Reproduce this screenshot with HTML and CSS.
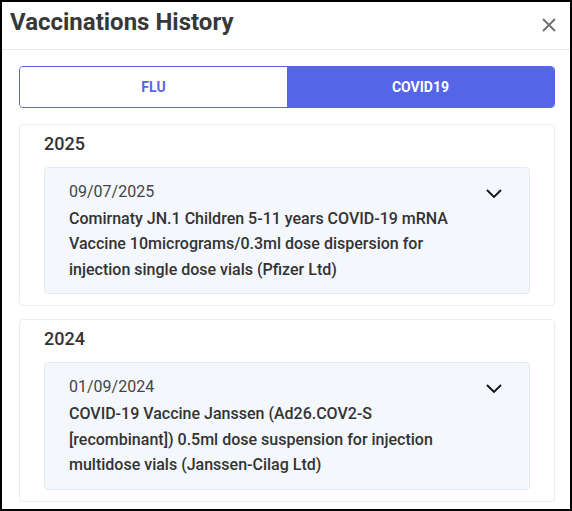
FILE: index.html
```html
<!DOCTYPE html>
<html>
<head>
<meta charset="utf-8">
<link rel="stylesheet" href="styles.css">
</head>
<body>
<div class="modal">
  <div class="header">
    <h1 class="title">Vaccinations History</h1>
    <svg class="close" width="14" height="14" viewBox="0 0 14 14"><path d="M1 1L13 13M13 1L1 13" stroke="#737373" stroke-width="2" fill="none"/></svg>
  </div>
  <div class="content">
    <div class="tabs">
      <div class="tab">FLU</div>
      <div class="tab active">COVID19</div>
    </div>
    <div class="card">
      <div class="year">2025</div>
      <div class="item">
        <div class="item-text">
          <div class="date">09/07/2025</div>
          <div class="desc">Comirnaty JN.1 Children 5-11 years COVID-19 mRNA Vaccine 10micrograms/0.3ml dose dispersion for injection single dose vials (Pfizer Ltd)</div>
        </div>
        <svg class="chev" width="16" height="10" viewBox="0 0 16 10"><path d="M1 1L8 8L15 1" stroke="#111" stroke-width="1.8" fill="none"/></svg>
      </div>
    </div>
    <div class="card">
      <div class="year">2024</div>
      <div class="item">
        <div class="item-text">
          <div class="date">01/09/2024</div>
          <div class="desc">COVID-19 Vaccine Janssen (Ad26.COV2-S [recombinant]) 0.5ml dose suspension for injection multidose vials (Janssen-Cilag Ltd)</div>
        </div>
        <svg class="chev" width="16" height="10" viewBox="0 0 16 10"><path d="M1 1L8 8L15 1" stroke="#111" stroke-width="1.8" fill="none"/></svg>
      </div>
    </div>
  </div>
</div>
</body>
</html>
```
FILE: styles.css
```css
html, body {
  margin: 0;
  padding: 0;
  background: #fff;
}
body {
  font-family: Roboto, "Liberation Sans", sans-serif;
}
.modal {
  box-sizing: border-box;
  width: 572px;
  height: 511px;
  border: 2px solid #000;
  background: #fff;
  overflow: hidden;
}
.header {
  height: 48px;
  box-sizing: border-box;
  border-bottom: 1px solid #e9e9f3;
  display: flex;
  align-items: flex-start;
  justify-content: space-between;
  padding: 4px 14px 0 8px;
}
.title {
  margin: 0;
  font-size: 24px;
  line-height: 32px;
  font-weight: 700;
  color: #383838;
}
.close {
  margin-top: 12px;
}
.content {
  padding: 16px 15px 0 17px;
}
.tabs {
  display: flex;
  height: 42px;
  box-sizing: border-box;
  border: 1px solid #5465e8;
  border-radius: 4px;
  overflow: hidden;
  margin-bottom: 16px;
}
.tab {
  flex: 1;
  display: flex;
  align-items: center;
  justify-content: center;
  font-size: 14px;
  font-weight: 700;
  color: #5465e8;
  background: #fff;
}
.tab.active {
  background: #5465e8;
  color: #fff;
}
.card {
  border: 1px solid #e6ecf4;
  border-radius: 4px;
  padding: 7px 24px 11px 24px;
  margin-bottom: 13px;
}
.year {
  font-size: 18px;
  line-height: 24px;
  font-weight: 500;
  color: #333;
  margin-bottom: 11px;
}
.item {
  display: flex;
  align-items: flex-start;
  gap: 18px;
  background: #f4f7fc;
  border: 1px solid #e4eaf3;
  border-radius: 4px;
  padding: 11px 27px 11px 24px;
}
.item-text {
  flex: 1;
}
.date {
  font-size: 16px;
  line-height: 25.6px;
  color: #444;
}
.desc {
  font-size: 16px;
  line-height: 25.6px;
  font-weight: 500;
  color: #333;
  margin-top: 1px;
}
.chev {
  margin-top: 10px;
  flex: none;
}
```
